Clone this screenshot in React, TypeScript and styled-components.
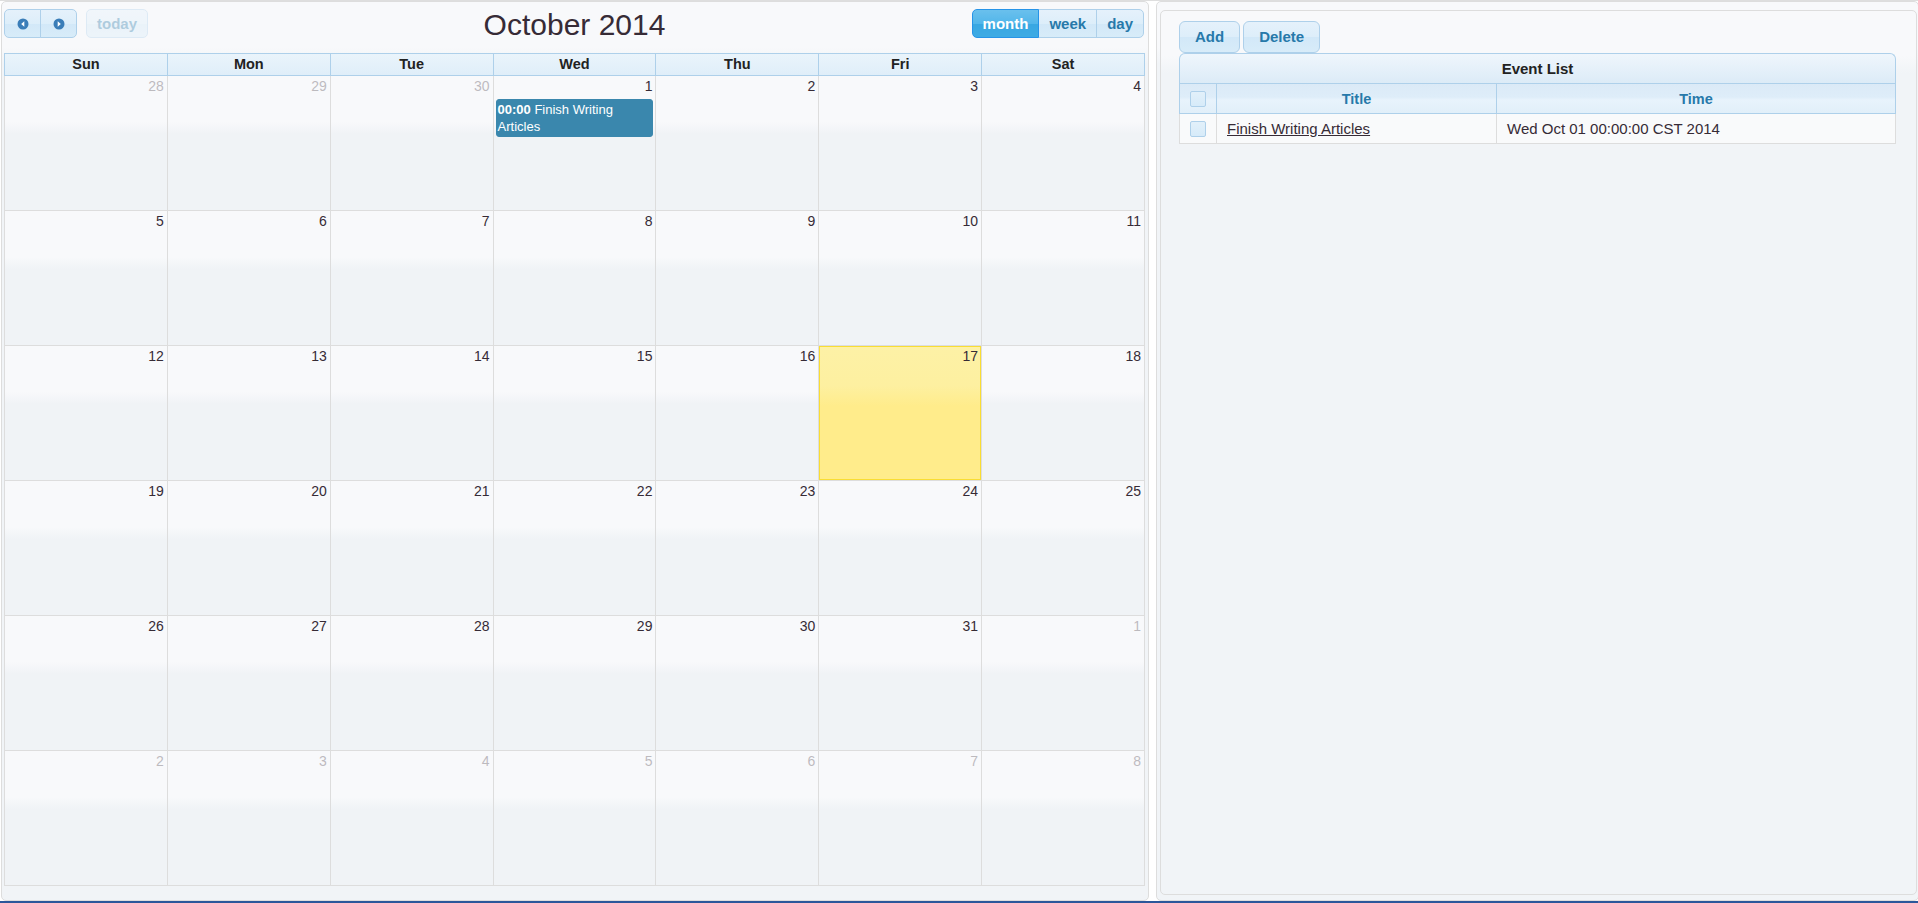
import React from 'react';
import styled, { createGlobalStyle, css } from 'styled-components';

const GlobalStyle = createGlobalStyle`
  html, body { margin: 0; padding: 0; background: #ffffff; }
  body { font-family: "Liberation Sans", Arial, sans-serif; overflow: hidden; color: #362b36; }
  * { box-sizing: border-box; }
`;

const panelBg = css`
  background: linear-gradient(to bottom, #f8f9fb 0px, #f8f9fb 45px, #f1f4f7 62px, #f1f4f7 100%);
`;

const defaultState = css`
  border: 1px solid #aed0ea;
  color: #2779aa;
  background: linear-gradient(to bottom, #e5f1fb 0%, #ddeefa 50%, #d2e8f8 51%, #d8ecf9 100%);
`;

const Page = styled.div`
  width: 1918px;
  height: 903px;
  overflow: hidden;
  border-top: 1px solid #dedede;
  display: flex;
  flex-direction: column;
`;

const Main = styled.div`
  display: flex;
  gap: 7px;
  padding-left: 1px;
  height: 900px;
`;

const BottomStrip = styled.div`
  height: 2px;
  background: #2b579a;
`;

const CalendarPanel = styled.section`
  flex: 0 0 1148px;
  height: 900px;
  border: 1px solid #dddddd;
  border-radius: 5px;
  padding: 2px 3px 0 2px;
  ${panelBg}
`;

const Toolbar = styled.div`
  display: grid;
  grid-template-columns: 1fr auto 1fr;
  align-items: start;
  height: 34px;
  padding-top: 5px;
  margin-bottom: 15px;
`;

const ToolSection = styled.div<{ $align: 'start' | 'end' }>`
  display: flex;
  gap: 9px;
  justify-self: ${p => p.$align};
  margin-right: ${p => (p.$align === 'end' ? '1px' : '0')};
`;

const ButtonGroup = styled.div`
  display: flex;
`;

const ToolButton = styled.button<{ $active?: boolean; $disabled?: boolean; $icon?: boolean }>`
  height: 29px;
  margin: 0;
  padding: ${p => (p.$icon ? '0' : '0 10px')};
  width: ${p => (p.$icon ? '37px' : 'auto')};
  display: flex;
  align-items: center;
  justify-content: center;
  font: bold 15px/27px "Liberation Sans", Arial, sans-serif;
  ${defaultState}
  border-radius: 0;
  cursor: pointer;
  & + & { margin-left: -1px; }
  &:first-child { border-top-left-radius: 5px; border-bottom-left-radius: 5px; }
  &:last-child { border-top-right-radius: 5px; border-bottom-right-radius: 5px; }
  ${p => p.$active && css`
    background: linear-gradient(to bottom, #6ac0ed 0%, #52b6ea 50%, #38a7e2 51%, #3eabe4 100%);
    border-color: #2694e8;
    color: #ffffff;
    position: relative;
    z-index: 1;
  `}
  ${p => p.$disabled && css`
    opacity: 0.35;
    cursor: default;
  `}
`;

const Title = styled.h2`
  margin: 0;
  font: normal 30px/32px "Liberation Sans", Arial, sans-serif;
  color: #362b36;
  white-space: nowrap;
`;

const DayHeaderRow = styled.div`
  display: grid;
  grid-template-columns: repeat(7, 1fr);
  border-top: 1px solid #aed0ea;
  border-left: 1px solid #aed0ea;
`;

const DayHeaderCell = styled.div`
  height: 22px;
  border-right: 1px solid #aed0ea;
  border-bottom: 1px solid #aed0ea;
  background: linear-gradient(to bottom, #eaf4fb 0%, #dfeef9 100%);
  color: #222222;
  font-weight: bold;
  font-size: 14.5px;
  line-height: 21px;
  text-align: center;
`;

const WeekRow = styled.div`
  display: grid;
  grid-template-columns: repeat(7, 1fr);
  border-left: 1px solid #dddddd;
`;

const DayCell = styled.div<{ $today?: boolean }>`
  height: 135px;
  border-right: 1px solid #dddddd;
  border-bottom: 1px solid #dddddd;
  display: flex;
  flex-direction: column;
  min-width: 0;
  background: linear-gradient(to bottom, #f8f9fb 0px, #f8f9fb 46px, #f0f3f6 58px, #f0f3f6 100%);
  ${p => p.$today && css`
    background: linear-gradient(to bottom, #fdf1a6 0px, #fdf0a0 40px, #ffec8b 60px, #ffec8b 100%);
    box-shadow: inset 0 0 0 1px #f9dd34;
  `}
`;

const DayNumber = styled.div<{ $other?: boolean }>`
  padding: 1px 3px 0 0;
  font-size: 14px;
  line-height: 19px;
  text-align: right;
  color: #362b36;
  opacity: ${p => (p.$other ? 0.3 : 1)};
`;

const EventChip = styled.div`
  margin: 3px 2px 0 2px;
  padding: 1px;
  border: 1px solid #3a87ad;
  border-radius: 3px;
  background: #3a87ad;
  color: #ffffff;
  font-size: 13px;
  line-height: 17px;
`;

const EventTime = styled.span`
  font-weight: bold;
`;

const SidePanel = styled.section`
  flex: 0 0 763px;
  height: 900px;
  border: 1px solid #dddddd;
  border-radius: 5px;
  padding: 8px 1px 5px 3px;
  ${panelBg}
`;

const InnerBox = styled.div`
  height: 100%;
  border: 1px solid #dddddd;
  border-radius: 5px;
  padding: 10px 20px 0 18px;
  ${panelBg}
`;

const ActionBar = styled.div`
  display: flex;
  gap: 3px;
`;

const ActionButton = styled.button`
  height: 32px;
  margin: 0;
  padding: 0 15px;
  font: bold 15px/30px "Liberation Sans", Arial, sans-serif;
  ${defaultState}
  border-radius: 6px;
  cursor: pointer;
`;

const EventTable = styled.div`
  width: 717px;
`;

const Caption = styled.div`
  height: 30px;
  border: 1px solid #aed0ea;
  border-bottom: none;
  border-radius: 6px 6px 0 0;
  background: linear-gradient(to bottom, #eff6fc 0%, #dcebf7 100%);
  color: #222222;
  font-weight: bold;
  font-size: 15px;
  line-height: 29px;
  text-align: center;
`;

const TableRow = styled.div<{ $head?: boolean }>`
  display: grid;
  grid-template-columns: 37px 280px 1fr;
  border: 1px solid ${p => (p.$head ? '#aed0ea' : '#dddddd')};
  border-top: ${p => (p.$head ? '1px solid #aed0ea' : 'none')};
  height: ${p => (p.$head ? '31px' : '30px')};
  background: ${p => (p.$head
    ? 'linear-gradient(to bottom, #dbeaf7 0%, #deedf9 45%, #e8f3fc 55%, #e1eff9 100%)'
    : '#f9fafb')};
`;

const TableCell = styled.div<{ $head?: boolean; $center?: boolean }>`
  display: flex;
  align-items: center;
  justify-content: ${p => (p.$center ? 'center' : 'flex-start')};
  padding: ${p => (p.$center ? '0' : '0 10px')};
  border-right: 1px solid ${p => (p.$head ? '#aed0ea' : '#dddddd')};
  &:last-child { border-right: none; }
  font-size: ${p => (p.$head ? '14.5px' : '15px')};
  font-weight: ${p => (p.$head ? 'bold' : 'normal')};
  color: ${p => (p.$head ? '#2779aa' : '#362b36')};
  white-space: nowrap;
`;

const CheckBox = styled.span`
  display: block;
  width: 16px;
  height: 16px;
  border: 1px solid #aed0ea;
  border-radius: 2px;
  background: linear-gradient(to bottom, #e2f0fa 0%, #d7ebf9 100%);
`;

const TitleLink = styled.a`
  color: #362b36;
  text-decoration: underline;
`;

const CircleArrow = ({ dir }: { dir: 'w' | 'e' }) => (
  <svg width="12" height="12" viewBox="0 0 12 12">
    <circle cx="6" cy="6" r="5.5" fill="#3a7db8" />
    {dir === 'w'
      ? <polygon points="7.3,3.3 4.2,6 7.3,8.7" fill="#ffffff" />
      : <polygon points="4.7,3.3 7.8,6 4.7,8.7" fill="#ffffff" />}
  </svg>
);

type Day = { n: number; other?: boolean; today?: boolean; event?: boolean };

const weeks: Day[][] = [
  [{ n: 28, other: true }, { n: 29, other: true }, { n: 30, other: true }, { n: 1, event: true }, { n: 2 }, { n: 3 }, { n: 4 }],
  [5, 6, 7, 8, 9, 10, 11].map(n => ({ n })),
  [12, 13, 14, 15, 16, 17, 18].map(n => ({ n, today: n === 17 })),
  [19, 20, 21, 22, 23, 24, 25].map(n => ({ n })),
  [{ n: 26 }, { n: 27 }, { n: 28 }, { n: 29 }, { n: 30 }, { n: 31 }, { n: 1, other: true }],
  [2, 3, 4, 5, 6, 7, 8].map(n => ({ n, other: true })),
];

const dayNames = ['Sun', 'Mon', 'Tue', 'Wed', 'Thu', 'Fri', 'Sat'];

export default function App() {
  return (
    <>
      <GlobalStyle />
      <Page>
        <Main>
          <CalendarPanel>
            <Toolbar>
              <ToolSection $align="start">
                <ButtonGroup>
                  <ToolButton $icon aria-label="prev"><CircleArrow dir="w" /></ToolButton>
                  <ToolButton $icon aria-label="next"><CircleArrow dir="e" /></ToolButton>
                </ButtonGroup>
                <ButtonGroup>
                  <ToolButton $disabled>today</ToolButton>
                </ButtonGroup>
              </ToolSection>
              <Title>October 2014</Title>
              <ToolSection $align="end">
                <ButtonGroup>
                  <ToolButton $active>month</ToolButton>
                  <ToolButton>week</ToolButton>
                  <ToolButton>day</ToolButton>
                </ButtonGroup>
              </ToolSection>
            </Toolbar>
            <DayHeaderRow>
              {dayNames.map(d => <DayHeaderCell key={d}>{d}</DayHeaderCell>)}
            </DayHeaderRow>
            {weeks.map((week, wi) => (
              <WeekRow key={wi}>
                {week.map((day, di) => (
                  <DayCell key={di} $today={day.today}>
                    <DayNumber $other={day.other}>{day.n}</DayNumber>
                    {day.event && (
                      <EventChip>
                        <EventTime>00:00</EventTime> Finish Writing Articles
                      </EventChip>
                    )}
                  </DayCell>
                ))}
              </WeekRow>
            ))}
          </CalendarPanel>
          <SidePanel>
            <InnerBox>
              <ActionBar>
                <ActionButton>Add</ActionButton>
                <ActionButton>Delete</ActionButton>
              </ActionBar>
              <EventTable>
                <Caption>Event List</Caption>
                <TableRow $head>
                  <TableCell $head $center><CheckBox /></TableCell>
                  <TableCell $head $center>Title</TableCell>
                  <TableCell $head $center>Time</TableCell>
                </TableRow>
                <TableRow>
                  <TableCell $center><CheckBox /></TableCell>
                  <TableCell><TitleLink href="#">Finish Writing Articles</TitleLink></TableCell>
                  <TableCell>Wed Oct 01 00:00:00 CST 2014</TableCell>
                </TableRow>
              </EventTable>
            </InnerBox>
          </SidePanel>
        </Main>
        <BottomStrip />
      </Page>
    </>
  );
}
